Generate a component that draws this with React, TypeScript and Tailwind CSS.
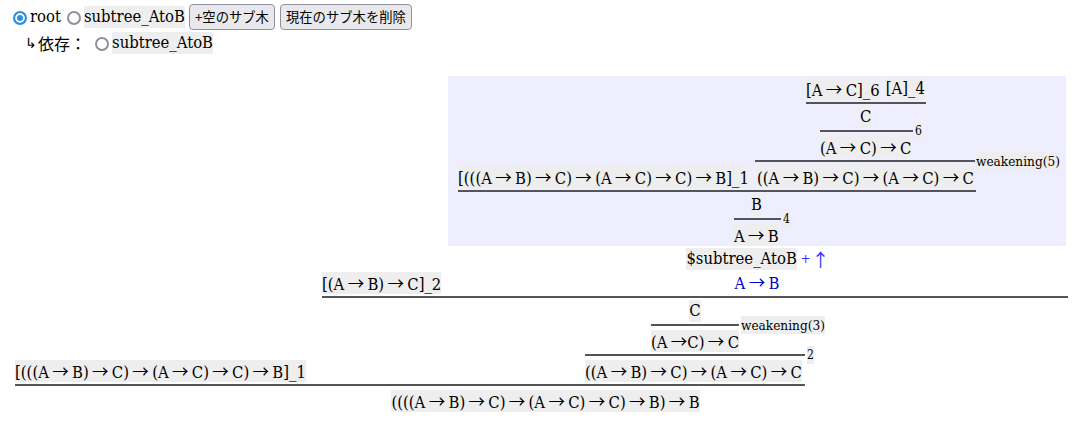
const FONT = "font-['DejaVu_Serif_Condensed','Noto_Sans_CJK_JP',serif]";
const ARROW = "font-['Noto_Sans_CJK_JP']";

/** Arrows come from a different face than the letters in the formulas */
function Arrowed({ text }: { text: string }) {
  const parts = text.split('→');
  return (
    <>
      {parts.map((p, i) => (
        <span key={i}>
          {p}
          {i < parts.length - 1 && <span className={ARROW}>→</span>}
        </span>
      ))}
    </>
  );
}

/** Grey chip behind every formula */
function Formula({ text, className = '' }: { text: string; className?: string }) {
  return (
    <span className={`block h-[22px] shrink-0 whitespace-pre bg-[#eeeeee] text-[16.5px] leading-[22px] text-black [word-spacing:-1.4px] ${className}`}>
      <Arrowed text={text} />
    </span>
  );
}

/** Inference line; the rule name hangs beside it without taking height */
function Bar({ width, label, small = false, className = '', labelClass = 'ml-[2px]' }: { width: string; label?: string; small?: boolean; className?: string; labelClass?: string }) {
  return (
    <div className={`flex h-[2px] shrink-0 items-center ${className}`}>
      <div className={`h-[2px] bg-[#555555] ${width}`} />
      {label && (
        <span className={`${labelClass} h-[18px] whitespace-pre bg-[#eeeeee] leading-[18px] text-black ${small ? 'text-[12px]' : 'text-[13.5px]'}`}>
          {label}
        </span>
      )}
    </div>
  );
}

function Radio({ checked = false }: { checked?: boolean }) {
  return (
    <span
      className={`mt-[2px] block h-[14px] w-[14px] shrink-0 rounded-full border-2 ${
        checked ? 'border-[#2b8fe0] bg-[#2b8fe0] shadow-[inset_0_0_0_2px_#ffffff]' : 'border-[#8f8f9d] bg-white'
      }`}
    />
  );
}

function Btn({ children, className = '' }: { children: React.ReactNode; className?: string }) {
  return (
    <button className={`h-[26px] shrink-0 rounded-[4px] border border-[#8f8f9d] bg-[#e9e9ed] px-[5px] font-['Noto_Sans_CJK_JP'] text-[13.33px] leading-none text-black ${className}`}>
      {children}
    </button>
  );
}

/** Sub-proof inside the shaded box (the $subtree_AtoB body) */
function SubtreeBox() {
  return (
    <div className="flex h-[170px] w-[618px] flex-col bg-[#eeeeff] pt-[2px]">
      <div className="ml-[358px] flex">
        <Formula text="[A → C]_6" />
        <span className="w-[6px]" />
        <Formula text="[A]_4" />
      </div>
      <Bar width="w-[120px]" className="ml-[358px] mt-[2px]" />
      <Formula text="C" className="ml-[412px] mt-[2px] self-start" />
      <Bar width="w-[93px]" label="6" small className="ml-[372px] mt-[2px]" />
      <Formula text="(A → C) → C" className="ml-[372px] mt-[4px] self-start" />
      <Bar width="w-[220px]" label="weakening(5)" labelClass="ml-[1px]" className="ml-[307px] mt-[2px]" />
      <div className="ml-[10px] mt-[4px] flex">
        <div className="flex w-[299px] shrink-0">
          <Formula text="[(((A → B) → C) → (A → C) → C) → B]_1" />
        </div>
        <Formula text="((A → B) → C) → (A → C) → C" />
      </div>
      <Bar width="w-[518px]" className="ml-[10px] mt-[2px]" />
      <Formula text="B" className="ml-[303px] mt-[2px] self-start" />
      <Bar width="w-[47px]" label="4" small className="ml-[286px] mt-[2px]" />
      <Formula text="A → B" className="ml-[286px] mt-[4px] self-start" />
    </div>
  );
}

/** Proof tree under the radio rows */
function ProofTree() {
  return (
    <div className="ml-[15px] mt-[21px] flex w-[1061px] flex-col">
      <div className="flex items-end">
        <div className="flex w-[307px] shrink-0">
          <Formula text="[(((A → B) → C) → (A → C) → C) → B]_1" />
        </div>
        <div className="flex w-[746px] shrink-0 flex-col">
          <div className="flex items-end">
            <div className="mb-[2px] flex w-[126px] shrink-0">
              <Formula text="[(A → B) → C]_2" />
            </div>
            <div className="mb-[3px] flex w-[618px] shrink-0 flex-col items-center">
              <SubtreeBox />
              <div className="mt-[2px] flex h-[22px] items-center pl-[2px]">
                <Formula text="$subtree_AtoB" />
                <span className="ml-[4px] text-[13px] leading-[22px] text-[#3333ff]">+</span>
                <span className={`${ARROW} ml-[1px] text-[18px] leading-[22px] text-[#3333ff]`}>↑</span>
              </div>
              <span className="mt-[1px] block h-[22px] text-[16.5px] leading-[22px] text-[#0000cc] [word-spacing:-1.4px]">
                <Arrowed text="A → B" />
              </span>
            </div>
          </div>
          <Bar width="w-[746px]" />
          <Formula text="C" className="mt-[2px] self-center" />
          <Bar width="w-[88px]" label="weakening(3)" className="ml-[329px] mt-[2px]" />
          <Formula text="(A →C) → C" className="ml-[329px] mt-[4px] self-start" />
          <Bar width="w-[220px]" label="2" small className="ml-[263px] mt-[2px]" />
          <Formula text="((A → B) → C) → (A → C) → C" className="ml-[263px] mt-[4px] self-start" />
        </div>
      </div>
      <Bar width="w-[790px]" className="mt-[2px]" />
      <Formula text="((((A → B) → C) → (A → C) → C) → B) → B" className="mt-[4px] self-center" />
    </div>
  );
}

export default function App() {
  return (
    <div className={`${FONT} h-[433px] w-[1080px] overflow-hidden bg-white text-[16.5px] text-black`}>
      <div className="ml-[13px] mt-[4px] flex h-[26px] items-center">
        <Radio checked />
        <span className="ml-[3px] leading-[22px]">root</span>
        <span className="ml-[6px]"><Radio /></span>
        <span className="ml-[3px] h-[22px] bg-[#eeeeee] leading-[22px]">subtree_AtoB</span>
        <span className="ml-[4px] flex"><Btn>+空のサブ木</Btn></span>
        <span className="ml-[5px] flex"><Btn>現在のサブ木を削除</Btn></span>
      </div>
      <div className="ml-[25px] mt-[1px] flex h-[24px] items-center">
        <span className="font-['Liberation_Serif'] text-[14px]">↳</span>
        <span className="ml-[1px] font-['Noto_Sans_CJK_JP'] text-[16px]">依存：</span>
        <span className="ml-[9px]"><Radio /></span>
        <span className="ml-[3px] h-[22px] bg-[#eeeeee] leading-[22px]">subtree_AtoB</span>
      </div>
      <ProofTree />
    </div>
  );
}
